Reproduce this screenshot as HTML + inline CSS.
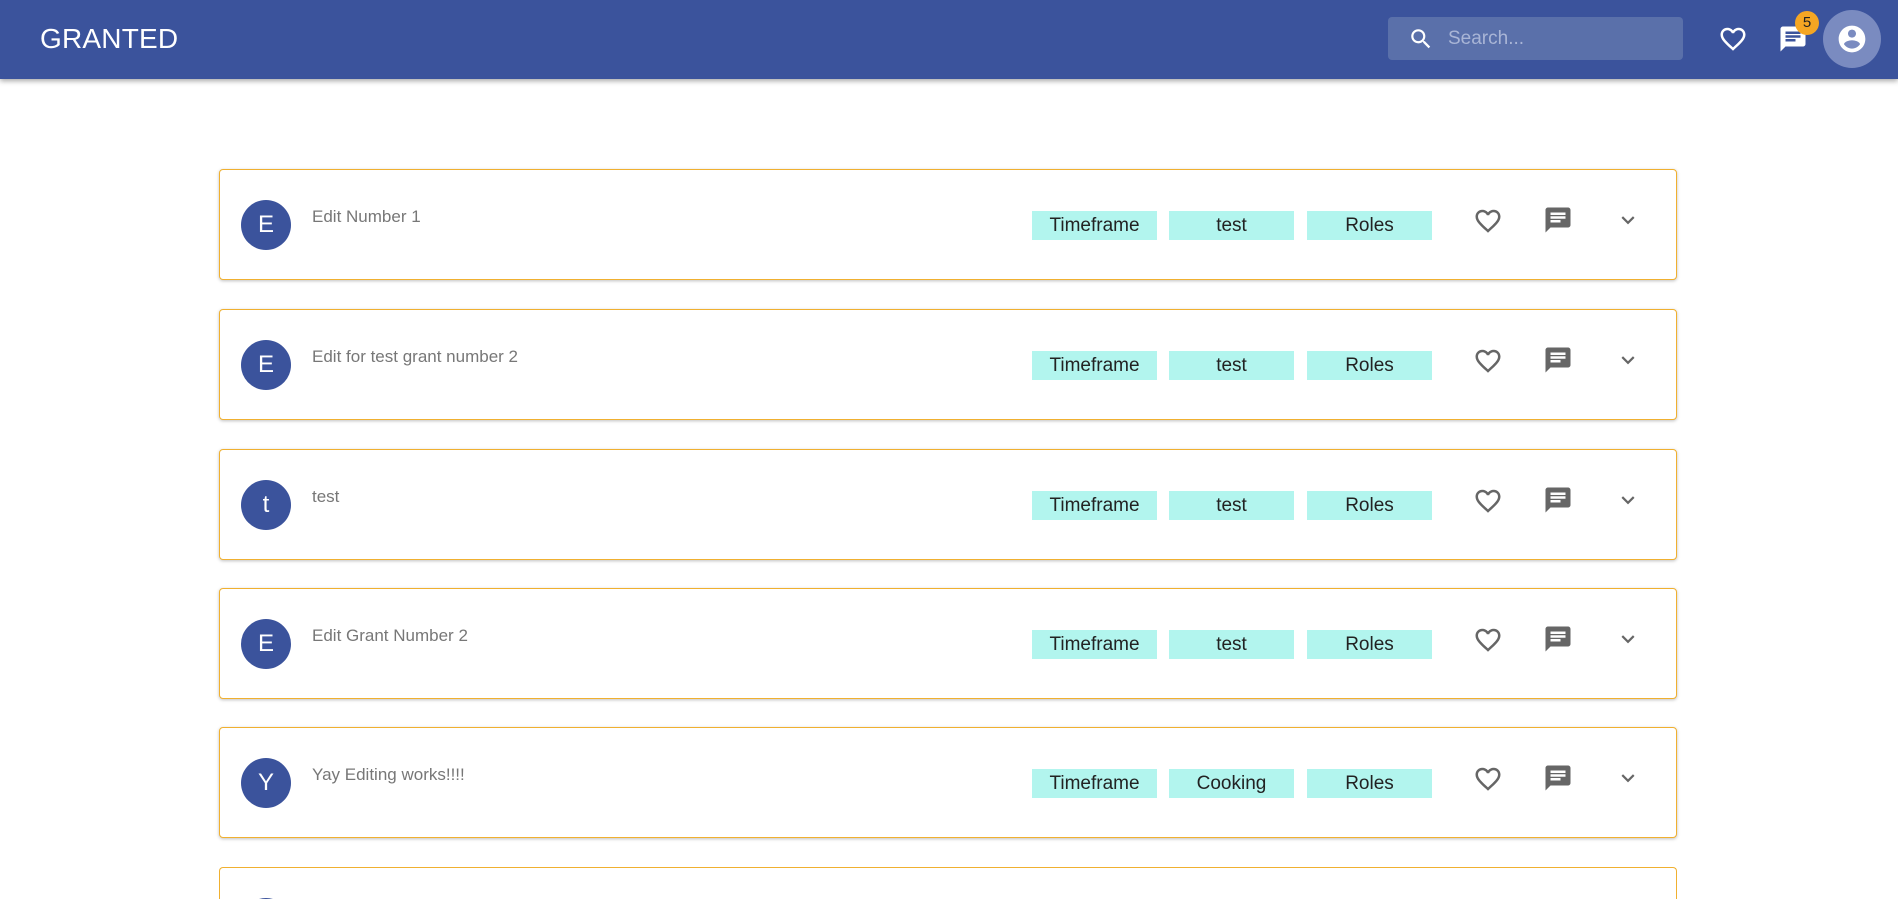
<!DOCTYPE html>
<html><head><style>
*{margin:0;padding:0;box-sizing:border-box}
html,body{width:1898px;height:899px;overflow:hidden;background:#fff}
body{font-family:"Liberation Sans",Roboto,sans-serif}
.wrap{position:relative;width:1898px;height:899px;overflow:hidden}
.hdr{position:absolute;left:0;top:0;width:1898px;height:79px;background:#3b539c;box-shadow:0 2px 5px rgba(0,0,0,.35);z-index:2}
.title{position:absolute;left:40px;top:23px;color:#fff;font-size:28px;letter-spacing:.2px}
.search{position:absolute;left:1388px;top:17px;width:295px;height:43px;background:#5a70aa;border-radius:4px}
.search span{position:absolute;left:60px;top:11px;color:#a9b5d6;font-size:19px}
.card{position:absolute;left:219px;width:1458px;height:111px;border:1px solid #f0b030;border-radius:4px;box-shadow:0 1px 3px rgba(0,0,0,.25);background:#fff;overflow:hidden}
.av{position:absolute;left:21px;top:30px;width:50px;height:50px;border-radius:50%;background:#3b539c;color:#fff;font-size:24px;text-align:center;line-height:50px}
.tx{position:absolute;left:92px;top:37px;color:#777;font-size:17px}
.chip{position:absolute;top:41px;width:125px;height:29px;background:#b2f5ee;color:#222;font-size:19px;text-align:center;line-height:29px}
.ic{position:absolute}
</style></head><body><div class="wrap">
<div class="hdr">
<div class="title">GRANTED</div>
<div class="search"><svg style="position:absolute;left:20px;top:9px" width="26" height="26" viewBox="0 0 24 24"><path fill="#fff" d="M15.5 14h-.79l-.28-.27A6.47 6.47 0 0 0 16 9.5 6.5 6.5 0 1 0 9.5 16c1.61 0 3.09-.59 4.23-1.57l.27.28v.79l5 4.99L20.49 19l-4.99-5zm-6 0C7.01 14 5 11.99 5 9.5S7.01 5 9.5 5 14 7.01 14 9.5 11.99 14 9.5 14z"/></svg><span>Search...</span></div>
<svg class="ic" style="left:1718px;top:24px" width="30" height="30" viewBox="0 0 24 24"><path fill="#fff" d="M16.5 3c-1.74 0-3.41.81-4.5 2.09C10.91 3.81 9.24 3 7.5 3 4.42 3 2 5.42 2 8.5c0 3.78 3.4 6.86 8.55 11.54L12 21.35l1.45-1.32C18.6 15.36 22 12.28 22 8.5 22 5.42 19.58 3 16.5 3zm-4.4 15.55l-.1.1-.1-.1C7.14 14.24 4 11.39 4 8.5 4 6.5 5.5 5 7.5 5c1.54 0 3.04.99 3.57 2.36h1.87C13.46 5.99 14.96 5 16.5 5c2 0 3.5 1.5 3.5 3.5 0 2.89-3.14 5.74-7.9 10.05z"/></svg>
<svg class="ic" style="left:1778px;top:24px" width="30" height="30" viewBox="0 0 24 24"><path fill="#fff" d="M20 2H4c-1.1 0-2 .9-2 2v18l4-4h14c1.1 0 2-.9 2-2V4c0-1.1-.9-2-2-2zM6 9h12v2H6V9zm8 5H6v-2h8v2zm4-6H6V6h12v2z"/></svg>
<div style="position:absolute;left:1795px;top:11px;width:24px;height:24px;border-radius:50%;background:#f5a623;color:#222;font-size:15px;text-align:center;line-height:24px">5</div>
<div style="position:absolute;left:1823px;top:10px;width:58px;height:58px;border-radius:50%;background:#7a8bc0"></div>
<svg class="ic" style="left:1836px;top:23px" width="32" height="32" viewBox="0 0 24 24"><path fill="#fff" d="M12 2C6.48 2 2 6.48 2 12s4.48 10 10 10 10-4.48 10-10S17.52 2 12 2zm0 3c1.66 0 3 1.34 3 3s-1.34 3-3 3-3-1.34-3-3 1.34-3 3-3zm0 14.2c-2.5 0-4.71-1.28-6-3.22.03-1.99 4-3.08 6-3.08 1.99 0 5.97 1.09 6 3.08-1.29 1.94-3.5 3.22-6 3.22z"/></svg>
</div>

<div class="card" style="top:169px"><div class="av">E</div><div class="tx">Edit Number 1</div>
<div class="chip" style="left:812px">Timeframe</div><div class="chip" style="left:949px">test</div><div class="chip" style="left:1087px">Roles</div>
<svg class="ic" style="left:1253px;top:36px" width="30" height="30" viewBox="0 0 24 24"><path fill="#666" d="M16.5 3c-1.74 0-3.41.81-4.5 2.09C10.91 3.81 9.24 3 7.5 3 4.42 3 2 5.42 2 8.5c0 3.78 3.4 6.86 8.55 11.54L12 21.35l1.45-1.32C18.6 15.36 22 12.28 22 8.5 22 5.42 19.58 3 16.5 3zm-4.4 15.55l-.1.1-.1-.1C7.14 14.24 4 11.39 4 8.5 4 6.5 5.5 5 7.5 5c1.54 0 3.04.99 3.57 2.36h1.87C13.46 5.99 14.96 5 16.5 5c2 0 3.5 1.5 3.5 3.5 0 2.89-3.14 5.74-7.9 10.05z"/></svg>
<svg class="ic" style="left:1323px;top:35px" width="30" height="30" viewBox="0 0 24 24"><path fill="#666" d="M20 2H4c-1.1 0-2 .9-2 2v18l4-4h14c1.1 0 2-.9 2-2V4c0-1.1-.9-2-2-2zM6 9h12v2H6V9zm8 5H6v-2h8v2zm4-6H6V6h12v2z"/></svg>
<svg class="ic" style="left:1395px;top:37px" width="26" height="26" viewBox="0 0 24 24"><path fill="#666" d="M16.59 8.59L12 13.17 7.41 8.59 6 10l6 6 6-6z"/></svg></div>

<div class="card" style="top:309px"><div class="av">E</div><div class="tx">Edit for test grant number 2</div>
<div class="chip" style="left:812px">Timeframe</div><div class="chip" style="left:949px">test</div><div class="chip" style="left:1087px">Roles</div>
<svg class="ic" style="left:1253px;top:36px" width="30" height="30" viewBox="0 0 24 24"><path fill="#666" d="M16.5 3c-1.74 0-3.41.81-4.5 2.09C10.91 3.81 9.24 3 7.5 3 4.42 3 2 5.42 2 8.5c0 3.78 3.4 6.86 8.55 11.54L12 21.35l1.45-1.32C18.6 15.36 22 12.28 22 8.5 22 5.42 19.58 3 16.5 3zm-4.4 15.55l-.1.1-.1-.1C7.14 14.24 4 11.39 4 8.5 4 6.5 5.5 5 7.5 5c1.54 0 3.04.99 3.57 2.36h1.87C13.46 5.99 14.96 5 16.5 5c2 0 3.5 1.5 3.5 3.5 0 2.89-3.14 5.74-7.9 10.05z"/></svg>
<svg class="ic" style="left:1323px;top:35px" width="30" height="30" viewBox="0 0 24 24"><path fill="#666" d="M20 2H4c-1.1 0-2 .9-2 2v18l4-4h14c1.1 0 2-.9 2-2V4c0-1.1-.9-2-2-2zM6 9h12v2H6V9zm8 5H6v-2h8v2zm4-6H6V6h12v2z"/></svg>
<svg class="ic" style="left:1395px;top:37px" width="26" height="26" viewBox="0 0 24 24"><path fill="#666" d="M16.59 8.59L12 13.17 7.41 8.59 6 10l6 6 6-6z"/></svg></div>

<div class="card" style="top:449px"><div class="av">t</div><div class="tx">test</div>
<div class="chip" style="left:812px">Timeframe</div><div class="chip" style="left:949px">test</div><div class="chip" style="left:1087px">Roles</div>
<svg class="ic" style="left:1253px;top:36px" width="30" height="30" viewBox="0 0 24 24"><path fill="#666" d="M16.5 3c-1.74 0-3.41.81-4.5 2.09C10.91 3.81 9.24 3 7.5 3 4.42 3 2 5.42 2 8.5c0 3.78 3.4 6.86 8.55 11.54L12 21.35l1.45-1.32C18.6 15.36 22 12.28 22 8.5 22 5.42 19.58 3 16.5 3zm-4.4 15.55l-.1.1-.1-.1C7.14 14.24 4 11.39 4 8.5 4 6.5 5.5 5 7.5 5c1.54 0 3.04.99 3.57 2.36h1.87C13.46 5.99 14.96 5 16.5 5c2 0 3.5 1.5 3.5 3.5 0 2.89-3.14 5.74-7.9 10.05z"/></svg>
<svg class="ic" style="left:1323px;top:35px" width="30" height="30" viewBox="0 0 24 24"><path fill="#666" d="M20 2H4c-1.1 0-2 .9-2 2v18l4-4h14c1.1 0 2-.9 2-2V4c0-1.1-.9-2-2-2zM6 9h12v2H6V9zm8 5H6v-2h8v2zm4-6H6V6h12v2z"/></svg>
<svg class="ic" style="left:1395px;top:37px" width="26" height="26" viewBox="0 0 24 24"><path fill="#666" d="M16.59 8.59L12 13.17 7.41 8.59 6 10l6 6 6-6z"/></svg></div>

<div class="card" style="top:588px"><div class="av">E</div><div class="tx">Edit Grant Number 2</div>
<div class="chip" style="left:812px">Timeframe</div><div class="chip" style="left:949px">test</div><div class="chip" style="left:1087px">Roles</div>
<svg class="ic" style="left:1253px;top:36px" width="30" height="30" viewBox="0 0 24 24"><path fill="#666" d="M16.5 3c-1.74 0-3.41.81-4.5 2.09C10.91 3.81 9.24 3 7.5 3 4.42 3 2 5.42 2 8.5c0 3.78 3.4 6.86 8.55 11.54L12 21.35l1.45-1.32C18.6 15.36 22 12.28 22 8.5 22 5.42 19.58 3 16.5 3zm-4.4 15.55l-.1.1-.1-.1C7.14 14.24 4 11.39 4 8.5 4 6.5 5.5 5 7.5 5c1.54 0 3.04.99 3.57 2.36h1.87C13.46 5.99 14.96 5 16.5 5c2 0 3.5 1.5 3.5 3.5 0 2.89-3.14 5.74-7.9 10.05z"/></svg>
<svg class="ic" style="left:1323px;top:35px" width="30" height="30" viewBox="0 0 24 24"><path fill="#666" d="M20 2H4c-1.1 0-2 .9-2 2v18l4-4h14c1.1 0 2-.9 2-2V4c0-1.1-.9-2-2-2zM6 9h12v2H6V9zm8 5H6v-2h8v2zm4-6H6V6h12v2z"/></svg>
<svg class="ic" style="left:1395px;top:37px" width="26" height="26" viewBox="0 0 24 24"><path fill="#666" d="M16.59 8.59L12 13.17 7.41 8.59 6 10l6 6 6-6z"/></svg></div>

<div class="card" style="top:727px"><div class="av">Y</div><div class="tx">Yay Editing works!!!!</div>
<div class="chip" style="left:812px">Timeframe</div><div class="chip" style="left:949px">Cooking</div><div class="chip" style="left:1087px">Roles</div>
<svg class="ic" style="left:1253px;top:36px" width="30" height="30" viewBox="0 0 24 24"><path fill="#666" d="M16.5 3c-1.74 0-3.41.81-4.5 2.09C10.91 3.81 9.24 3 7.5 3 4.42 3 2 5.42 2 8.5c0 3.78 3.4 6.86 8.55 11.54L12 21.35l1.45-1.32C18.6 15.36 22 12.28 22 8.5 22 5.42 19.58 3 16.5 3zm-4.4 15.55l-.1.1-.1-.1C7.14 14.24 4 11.39 4 8.5 4 6.5 5.5 5 7.5 5c1.54 0 3.04.99 3.57 2.36h1.87C13.46 5.99 14.96 5 16.5 5c2 0 3.5 1.5 3.5 3.5 0 2.89-3.14 5.74-7.9 10.05z"/></svg>
<svg class="ic" style="left:1323px;top:35px" width="30" height="30" viewBox="0 0 24 24"><path fill="#666" d="M20 2H4c-1.1 0-2 .9-2 2v18l4-4h14c1.1 0 2-.9 2-2V4c0-1.1-.9-2-2-2zM6 9h12v2H6V9zm8 5H6v-2h8v2zm4-6H6V6h12v2z"/></svg>
<svg class="ic" style="left:1395px;top:37px" width="26" height="26" viewBox="0 0 24 24"><path fill="#666" d="M16.59 8.59L12 13.17 7.41 8.59 6 10l6 6 6-6z"/></svg></div>

<div class="card" style="top:867px;height:32px;border-bottom:none;border-radius:4px 4px 0 0;box-shadow:none"><div class="av">&nbsp;</div></div>
</div></body></html>
